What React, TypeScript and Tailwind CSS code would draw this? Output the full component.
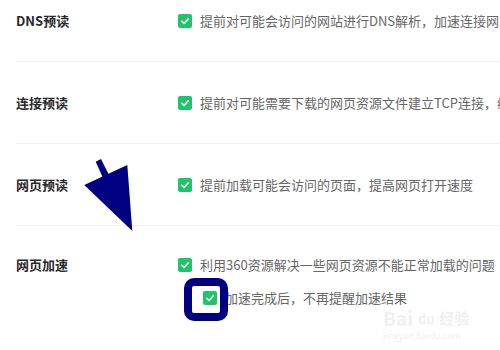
import React from "react";

const Check = () => (
  <span className="flex h-[14px] w-[14px] shrink-0 items-center justify-center rounded-[2px] bg-[#22c46b]">
    <svg width="10" height="10" viewBox="0 0 10 10" fill="none">
      <path d="M1.8 5.2 L4.1 7.4 L8.3 2.8" stroke="#ffffff" strokeWidth="1.5" strokeLinecap="round" strokeLinejoin="round" />
    </svg>
  </span>
);

const Line = ({ text, indent }: { text: string; indent?: boolean }) => (
  <div className={"flex h-[20px] items-center gap-[8px] whitespace-nowrap " + (indent ? "ml-[25px]" : "")}>
    <Check />
    <span className="text-[13px] leading-[20px] text-[#666666]">{text}</span>
  </div>
);

const Row = ({ label, children, first }: { label: string; children: React.ReactNode; first?: boolean }) => (
  <div className={"flex h-[82px] items-center border-b border-[#f0f0f0] " + (first ? "-mt-[20px]" : "")}>
    <div className="flex h-[20px] w-[162px] shrink-0 items-center text-[13px] font-bold text-[#2a2a2a]">{label}</div>
    <div className="flex flex-col gap-[13px]">{children}</div>
  </div>
);

export default function App() {
  return (
    <div
      className="relative h-[350px] w-[500px] overflow-hidden bg-white"
      style={{ fontFamily: '"Noto Sans CJK SC", "Noto Sans", sans-serif' }}
    >
      <div className="ml-4">
        <Row label="DNS预读" first>
          <Line text="提前对可能会访问的网站进行DNS解析，加速连接网页" />
        </Row>
        <Row label="连接预读">
          <Line text="提前对可能需要下载的网页资源文件建立TCP连接，缩短下载时间" />
        </Row>
        <Row label="网页预读">
          <Line text="提前加载可能会访问的页面，提高网页打开速度" />
        </Row>
        <div className="flex items-start pt-[29px]">
          <div className="flex h-[20px] w-[162px] shrink-0 items-center text-[13px] font-bold text-[#2a2a2a]">网页加速</div>
          <div className="flex flex-col gap-[13px]">
            <Line text="利用360资源解决一些网页资源不能正常加载的问题" />
            <Line text="加速完成后，不再提醒加速结果" indent />
          </div>
        </div>
      </div>

      {/* watermark */}
      <div className="pointer-events-none absolute left-[383px] top-[310px] flex flex-col">
        <div className="flex h-[16px] items-end gap-[5px]">
          <span className="text-[19px] leading-[16px] font-bold text-[#f0f0f0]">Bai</span>
          <span className="text-[13px] leading-[14px] font-bold text-[#f0f0f0]">du</span>
          <span className="text-[15px] leading-[16px] font-bold text-[#f0f0f0]">经验</span>
        </div>
        <span className="mt-[5px] text-[9px] leading-[10px] text-[#f0f0f0]">jingyan.baidu.com</span>
      </div>

      {/* annotations */}
      <svg className="pointer-events-none absolute left-0 top-0" width="500" height="350" viewBox="0 0 500 350">
        <polygon points="95.7,161.7 101,159 109,175 103,178" fill="#000080" />
        <polygon points="84.3,185 127.3,165 132.3,231" fill="#000080" />
        <rect x="188" y="282" width="36" height="35" rx="6" ry="6" fill="none" stroke="#000080" strokeWidth="8" />
      </svg>
    </div>
  );
}
